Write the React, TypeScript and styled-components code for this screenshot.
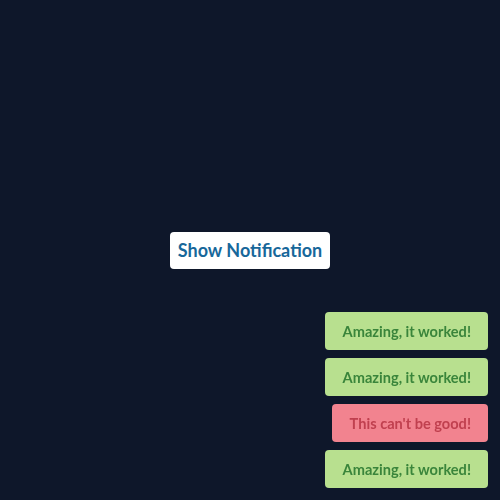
import styled, { createGlobalStyle } from "styled-components";

const GlobalStyle = createGlobalStyle`
  html, body {
    margin: 0;
    padding: 0;
    background-color: #0e172a;
  }

  * {
    box-sizing: border-box;
  }
`;

const Page = styled.main`
  height: 100vh;
  display: flex;
  align-items: center;
  justify-content: center;
  font-family: "Lato", "Noto Sans", sans-serif;
`;

const ShowButton = styled.button`
  height: 37px;
  width: 160px;
  padding: 0;
  border: none;
  border-radius: 4px;
  background-color: #ffffff;
  color: #17679a;
  font-family: inherit;
  font-size: 18px;
  font-weight: 700;
  cursor: pointer;
`;

const ToastStack = styled.ul`
  position: fixed;
  right: 12px;
  bottom: 12px;
  margin: 0;
  padding: 0;
  list-style: none;
  display: flex;
  flex-direction: column;
  align-items: flex-end;
  gap: 8px;
`;

type Kind = "success" | "error";

const Toast = styled.li<{ $kind: Kind }>`
  height: 38px;
  display: flex;
  align-items: center;
  padding: 0 17px 0 18px;
  border-radius: 4px;
  background-color: ${(p) => (p.$kind === "error" ? "#f2838f" : "#b8e08f")};
  color: ${(p) => (p.$kind === "error" ? "#c0404f" : "#3a853b")};
  font-family: "Lato", "Noto Sans", sans-serif;
  font-size: 14.6px;
  font-weight: 700;
`;

const toasts: { id: number; kind: Kind; text: string }[] = [
  { id: 1, kind: "success", text: "Amazing, it worked!" },
  { id: 2, kind: "success", text: "Amazing, it worked!" },
  { id: 3, kind: "error", text: "This can't be good!" },
  { id: 4, kind: "success", text: "Amazing, it worked!" },
];

function App() {
  return (
    <>
      <GlobalStyle />
      <Page>
        <ShowButton>Show Notification</ShowButton>
      </Page>
      <ToastStack>
        {toasts.map((t) => (
          <Toast key={t.id} $kind={t.kind}>
            {t.text}
          </Toast>
        ))}
      </ToastStack>
    </>
  );
}

export default App;
